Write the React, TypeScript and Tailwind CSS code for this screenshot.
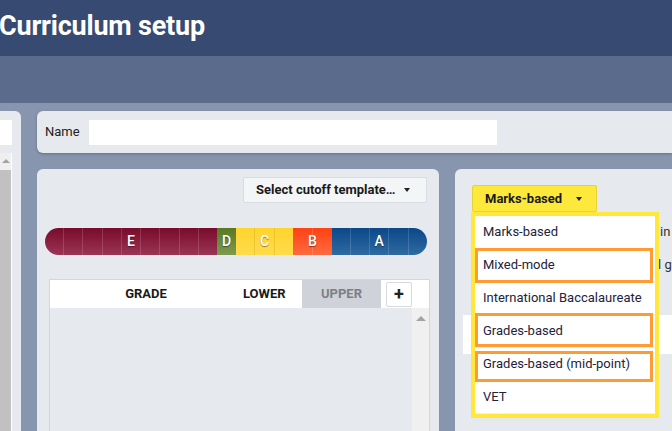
// Curriculum setup – cutoff editor with grading-type dropdown open
import React from "react";

type Segment = { grade: string; cells: number; grow: string; bg: string; line: string };

// 20 equal cells in the band, grouped by grade
const segments: Segment[] = [
  { grade: "E", cells: 9, grow: "flex-[9]", bg: "bg-[linear-gradient(#790a2a,#9b3555)]", line: "border-white/15" },
  { grade: "D", cells: 1, grow: "flex-[1]", bg: "bg-[linear-gradient(#587822,#7e9a52)]", line: "border-white/15" },
  { grade: "C", cells: 3, grow: "flex-[3]", bg: "bg-[linear-gradient(#ffd42c,#ffdc4c)]", line: "border-[#e0b828]/60" },
  { grade: "B", cells: 2, grow: "flex-[2]", bg: "bg-[linear-gradient(#ff4212,#ff6a40)]", line: "border-white/15" },
  { grade: "A", cells: 5, grow: "flex-[5]", bg: "bg-[linear-gradient(#0b4888,#2f6aa2)]", line: "border-white/15" },
];

const options = ["Marks-based", "Mixed-mode", "International Baccalaureate", "Grades-based", "Grades-based (mid-point)", "VET"];

function Caret() {
  return <span className="inline-block w-0 h-0 border-x-[3.5px] border-x-transparent border-t-[4px] border-t-[#222]" />;
}

function GradeBand() {
  return (
    <div className="flex h-[27px] rounded-full overflow-hidden">
      {segments.map((s) => (
        <div key={s.grade} className={`relative flex ${s.grow} ${s.bg}`}>
          {Array.from({ length: s.cells }).map((_, i) => (
            <div key={i} className={`flex-1 ${i < s.cells - 1 ? `border-r ${s.line}` : ""}`} />
          ))}
          {/* label sits over the cells, centred on the segment */}
          <span className="absolute inset-0 flex items-center justify-center text-[14px] font-medium text-white [text-shadow:0_1px_1px_rgba(0,0,0,0.45)]">
            {s.grade}
          </span>
        </div>
      ))}
    </div>
  );
}

function CutoffTable() {
  return (
    <div className="ml-[4px] mr-[-3px] mt-[24px] border border-[#d3d7dd] h-[200px] flex flex-col">
      <div className="flex items-center h-[28px] bg-white text-[13px] font-bold text-[#1a1a1a]">
        <div className="w-[192px] text-center">GRADE</div>
        <div className="w-[60px] pl-[1px]">LOWER</div>
        <div className="w-[79px] h-full flex items-center justify-center bg-[#cfd3d9] text-[#7d7f84]">UPPER</div>
        <button className="ml-[5px] w-[26px] h-[25px] flex items-center justify-center bg-white border border-[#d6d9de] rounded-[2px] text-[18px] leading-none text-[#222]">
          +
        </button>
      </div>
      <div className="flex flex-1 bg-[#e6e9ee]">
        <div className="flex-1" />
        <div className="w-[17px] bg-[#f0f0f0] flex justify-center pt-[8px]">
          <span className="w-0 h-0 border-x-[5px] border-x-transparent border-b-[5px] border-b-[#a3a3a3]" />
        </div>
      </div>
    </div>
  );
}

function GradingTypePanel() {
  return (
    <section className="relative flex-1 rounded-tl-md bg-[#e6e9ee] pt-[16px] pl-[17px] overflow-hidden">
      <div className="relative inline-block">
        <button className="flex items-center gap-[14px] h-[27px] w-[125px] pl-[12px] bg-[#fde83c] border border-[#e6d23a] rounded-[2px] text-[13px] font-bold text-[#1a1a1a]">
          Marks-based
          <Caret />
        </button>
        <div className="absolute top-full left-[-1px] z-10 w-[188px] border-4 border-[#ffe83a] bg-white">
          {options.map((o) => (
            <div key={o} className="h-[33px] flex items-center pl-[8px] text-[13px] text-[#22233a] whitespace-nowrap border-b border-[#f1f1f1] last:border-b-0">
              {o}
            </div>
          ))}
          {/* highlight boxes drawn over the menu */}
          <div className="absolute left-0 top-[32px] w-[178px] h-[35px] border-[3px] border-[#ff9b33]" />
          <div className="absolute left-0 top-[97px] w-[178px] h-[34px] border-[3px] border-[#ff9b33]" />
          <div className="absolute left-0 top-[135px] w-[178px] h-[31px] border-[3px] border-[#ff9b33]" />
        </div>
      </div>
      {/* text under the open menu, only its ends peek out */}
      <div className="mt-[10px] ml-[188px] h-[20px] leading-[20px] text-[13px] text-[#333] whitespace-nowrap">in</div>
      <div className="mt-[13px] ml-[186px] h-[20px] leading-[20px] text-[13px] text-[#333] whitespace-nowrap">l g</div>
      <div className="mt-[40px] ml-[-9px] h-[39px] bg-white" />
    </section>
  );
}

export default function App() {
  return (
    <div className="w-[672px] h-[431px] overflow-hidden bg-[#8895ae] font-['Roboto','Liberation_Sans',sans-serif]">
      <header className="h-[56px] bg-[#364a72] flex items-center pb-[3px]">
        <h1 className="ml-[-1px] text-[27px] font-bold text-white tracking-[-0.2px]">Curriculum setup</h1>
      </header>
      <div className="h-[47px] bg-[#5b6b8b]" />

      <main className="flex gap-4 pt-[8px]">
        {/* left list panel, mostly off screen */}
        <aside className="w-[21px] h-[320px] shrink-0 rounded-tr-md bg-[#e6e9ee] pt-[9px]">
          <div className="w-[12px] h-[25px] bg-white" />
          <div className="mt-[8px] w-[12px] border-r border-white">
            <div className="h-[17px] bg-[#efefef] flex justify-center pt-[6px]">
              <span className="w-0 h-0 border-x-[4px] border-x-transparent border-b-[4px] border-b-[#a3a3a3]" />
            </div>
            <div className="h-[300px] bg-[#c1c1c1]" />
          </div>
        </aside>

        <div className="flex-1 flex flex-col gap-4 min-w-0">
          <section className="h-[42px] rounded-l-md bg-[#e6e9ee] shadow-[0_1px_3px_rgba(0,0,0,0.25)] flex items-center pl-[8px]">
            <label className="text-[13px] text-[#222]">Name</label>
            <input className="ml-[9px] w-[408px] h-[25px] bg-white outline-none" />
          </section>

          <div className="flex gap-4 h-[270px]">
            <section className="w-[402px] shrink-0 rounded-t-md bg-[#e6e9ee] pt-[8px] pl-[8px] pr-[12px]">
              <div className="flex justify-end">
                <button className="flex items-center gap-[8px] h-[26px] w-[184px] pl-[12px] bg-[#f4f5f7] border border-[#d8dbe0] rounded-[2px] text-[13px] font-bold text-[#1a1a1a]">
                  Select cutoff template…
                  <Caret />
                </button>
              </div>
              <div className="mt-[25px]">
                <GradeBand />
              </div>
              <CutoffTable />
            </section>
            <GradingTypePanel />
          </div>
        </div>
      </main>
    </div>
  );
}
